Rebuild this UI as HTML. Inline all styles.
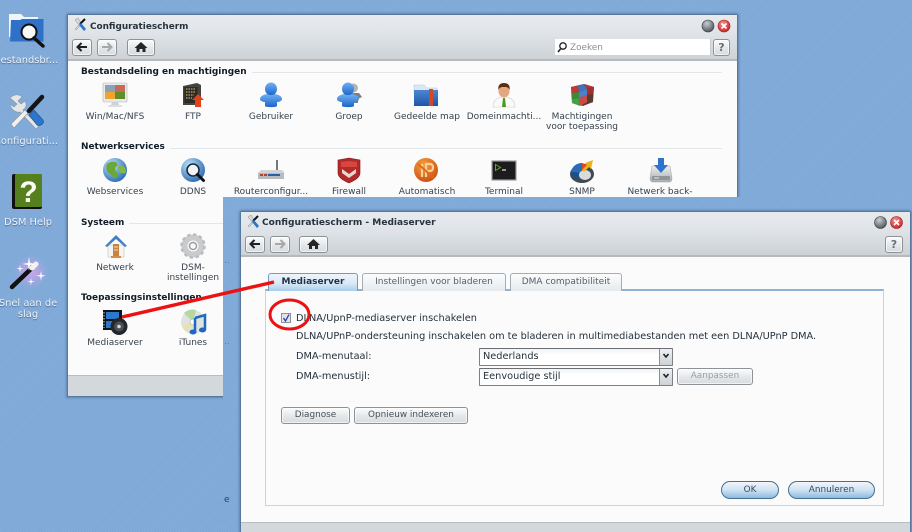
<!DOCTYPE html>
<html lang="nl">
<head>
<meta charset="utf-8">
<title>Configuratiescherm - Mediaserver</title>
<style>
html,body{margin:0;padding:0;width:912px;height:532px;overflow:hidden;background:#80aad9}
#root{position:absolute;left:0;top:0;width:912px;height:532px;overflow:hidden;filter:blur(.35px);font-family:"DejaVu Sans","Liberation Sans",sans-serif;color:#33404c}
.hatch{background-color:#80aad9;background-image:repeating-linear-gradient(135deg,#86aedb 0,#86aedb 1px,#7ca7d6 1px,#7ca7d6 2px)}
.abs,.win,.bar,.btn,.t,.l,.h,.rule,.dl,svg{position:absolute}
svg{left:0;top:0;overflow:visible}
.win{background:#fbfbfb;border:1px solid #56789f;box-shadow:0 0 2px 1px #5f83ad;border-radius:2px 2px 0 0}
.bar{background:linear-gradient(#e8ebee,#dfe3e7 45%,#cdd2d6);border-bottom:2px solid #b6babd}
.btn{box-sizing:border-box;border:1px solid #8d9296;border-radius:3px;background:linear-gradient(#fbfcfc,#e4e7ea 55%,#d7dbde);box-shadow:inset 0 0 0 1px rgba(255,255,255,.6)}
.t{white-space:nowrap;font-size:9.75px;line-height:12px;color:#25313c}
.l{width:84px;text-align:center;font-size:9px;line-height:10px;color:#36424e;white-space:nowrap}
.h{font-weight:bold;font-size:8.95px;line-height:12px;color:#101c27;white-space:nowrap;background:#fbfbfb;padding-right:5px}
.rule{height:1px;background:#e2e7ec}
.dl{width:76px;text-align:center;font-size:9.9px;line-height:11px;color:#eef4fb;text-shadow:0 1px 1px #48678c;white-space:nowrap}
.c{text-align:center;color:#46515c;font-size:8.9px;line-height:15px}
.tab{box-sizing:border-box;position:absolute;height:18px;border:1px solid #a4adb5;border-bottom:0;border-radius:3px 3px 0 0;background:linear-gradient(#fbfcfc,#e6eaed);text-align:center;font-size:9px;line-height:17px;color:#55606a;white-space:nowrap}
.sel{position:absolute;box-sizing:border-box;height:18px;border:1px solid #7c8084;border-top-color:#6b6f73;border-radius:1px;background:linear-gradient(#f2f3f4,#fff 35%);font-size:9.75px;line-height:16px;padding-left:3px;color:#25313c}
.ar{position:absolute;right:0;top:0;width:13px;height:16px;background:linear-gradient(#eef0f2,#cdd2d6);border-left:1px solid #8a8e92;box-sizing:border-box}
.pb{box-sizing:border-box;position:absolute;height:18px;border:1px solid #48708f;border-radius:9px;background:linear-gradient(#f1f6fb,#cfe2f2 50%,#8dbbe1);text-align:center;font-size:8.9px;line-height:16px;color:#3c4a55}
</style>
</head>
<body>
<div id="root" class="hatch">

<!-- desktop icons -->
<svg width="912" height="532">
  <defs>
    <linearGradient id="b1" x1="0" y1="0" x2="0" y2="1"><stop offset="0" stop-color="#6fb0f5"/><stop offset="1" stop-color="#1d66c8"/></linearGradient>
    <linearGradient id="b2" x1="0" y1="0" x2="0" y2="1"><stop offset="0" stop-color="#4b86d2"/><stop offset="1" stop-color="#1e57a8"/></linearGradient>
    <linearGradient id="g1" x1="0" y1="0" x2="0" y2="1"><stop offset="0" stop-color="#eceeef"/><stop offset="1" stop-color="#a9adb0"/></linearGradient>
    <radialGradient id="glob" cx=".35" cy=".3" r=".8"><stop offset="0" stop-color="#bfe2fa"/><stop offset="1" stop-color="#1f63ad"/></radialGradient>
    <radialGradient id="org" cx=".4" cy=".3" r=".8"><stop offset="0" stop-color="#f6a13b"/><stop offset="1" stop-color="#c64710"/></radialGradient>
    <radialGradient id="gl" cx=".4" cy=".3" r=".8"><stop offset="0" stop-color="#c8ced2"/><stop offset="1" stop-color="#40474c"/></radialGradient>
    <radialGradient id="rd" cx=".4" cy=".3" r=".8"><stop offset="0" stop-color="#f5928a"/><stop offset="1" stop-color="#c3191c"/></radialGradient>
    <radialGradient id="wn" cx=".5" cy=".5" r=".5"><stop offset="0" stop-color="#d0a4ee"/><stop offset="1" stop-color="#c99fe8" stop-opacity="0"/></radialGradient>
  </defs>
  <!-- folder -->
  <path d="M9 14h12l3 3h14v20H9z" fill="#f1f5fa"/>
  <path d="M11 20h9l2-1h21.500v22.500H10z" fill="#2f70c8"/>
  <circle cx="29" cy="32" r="7.500" fill="#f7f7f7" stroke="#111" stroke-width="2"/>
  <path d="M34 38l9 8" stroke="#111" stroke-width="3.500" stroke-linecap="round"/>
  <!-- tools -->
  <path d="M10 98c4-4 9-4 12-1l-4 4 3 3 4-3c2 4 1 7-2 9l16 16-3 3-16-17c-5 1-9-3-10-8l4 3 3-3z" fill="#e4e6e8" stroke="#8d9498" stroke-width=".6"/>
  <path d="M11 124l14-14 3 3-14 15z" fill="#eef0f1" stroke="#8d9498" stroke-width=".6"/>
  <path d="M42 97L29 111" stroke="#151515" stroke-width="4.500" stroke-linecap="round"/>
  <path d="M29 115l5-5 9 10c2 3-3 7-6 5z" fill="#2c77cc" stroke="#164a8d" stroke-width=".6"/>
  <!-- book -->
  <rect x="12" y="174" width="30" height="35" rx="2" fill="#111"/>
  <rect x="15" y="174" width="27" height="33" rx="1" fill="#55801d"/>
  <text x="28.500" y="202" text-anchor="middle" font-family="Liberation Sans" font-weight="bold" font-size="30" fill="#fbfbf4">?</text>
  <!-- wand -->
  <circle cx="31" cy="272" r="17" fill="url(#wn)"/>
  <path d="M12 287L35 265" stroke="#111" stroke-width="4.500" stroke-linecap="round"/>
  <path d="M32 268L36 264" stroke="#f2f2f2" stroke-width="5" stroke-linecap="round"/>
  <path d="M29 257l1 6 6 1-6 1-1 6-1-6-6-1 6-1zM41 271l.8 4 4 .8-4 .8-.8 4-.8-4-4-.8 4-.8zM20 265l.6 3 3 .6-3 .6-.6 3-.6-3-3-.6 3-.6zM31 278l.6 3 3 .6-3 .6-.6 3-.6-3-3-.6 3-.6z" fill="#fff"/>
</svg>
<div class="dl" style="left:-12px;top:55px">Bestandsbr...</div>
<div class="dl" style="left:-12px;top:136px">Configurati...</div>
<div class="dl" style="left:-10px;top:217px">DSM Help</div>
<div class="dl" style="left:-10px;top:298px">Snel aan de<br>slag</div>

<!-- window 1 -->
<div class="win" style="left:67px;top:14px;width:669px;height:381px"></div>
<div class="bar" style="left:68px;top:15px;width:669px;height:44px"></div>
<div class="t" style="left:90px;top:21px;font-weight:bold;font-size:8.9px;color:#27333e">Configuratiescherm</div>
<div class="btn" style="left:72px;top:39px;width:20px;height:17px"></div>
<div class="btn" style="left:97px;top:39px;width:20px;height:17px"></div>
<div class="btn" style="left:127px;top:39px;width:28px;height:17px"></div>
<div class="abs" style="left:555px;top:39px;width:155px;height:16px;background:#fff;border-bottom:1px solid #d0d4d7;border-right:1px solid #c8ccd0"></div>
<div class="t" style="left:570px;top:42px;color:#8a8f94;font-size:8.9px">Zoeken</div>
<div class="btn c" style="left:713px;top:39px;width:17px;height:17px;font-weight:bold;font-size:11px;color:#6a7075">?</div>
<div class="abs" style="left:68px;top:375px;width:669px;height:21px;background:#d3d8dc;border-top:1px solid #b9bdc0;box-sizing:border-box"></div>

<div class="rule" style="left:81px;top:72px;width:641px"></div>
<div class="h" style="left:81px;top:66px">Bestandsdeling en machtigingen</div>
<div class="rule" style="left:81px;top:148px;width:641px"></div>
<div class="h" style="left:81px;top:141px">Netwerkservices</div>
<div class="rule" style="left:81px;top:223px;width:641px"></div>
<div class="h" style="left:81px;top:217px">Systeem</div>
<div class="h" style="left:81px;top:292px">Toepassingsinstellingen</div>

<div class="l" style="left:73px;top:112px">Win/Mac/NFS</div>
<div class="l" style="left:151px;top:112px">FTP</div>
<div class="l" style="left:229px;top:112px">Gebruiker</div>
<div class="l" style="left:307px;top:112px">Groep</div>
<div class="l" style="left:385px;top:112px">Gedeelde map</div>
<div class="l" style="left:462px;top:112px">Domeinmachti...</div>
<div class="l" style="left:540px;top:112px">Machtigingen<br>voor toepassing</div>
<div class="l" style="left:73px;top:187px">Webservices</div>
<div class="l" style="left:151px;top:187px">DDNS</div>
<div class="l" style="left:229px;top:187px">Routerconfigur...</div>
<div class="l" style="left:307px;top:187px">Firewall</div>
<div class="l" style="left:385px;top:187px">Automatisch</div>
<div class="l" style="left:462px;top:187px">Terminal</div>
<div class="l" style="left:540px;top:187px">SNMP</div>
<div class="l" style="left:618px;top:187px">Netwerk back-</div>
<div class="l" style="left:73px;top:263px">Netwerk</div>
<div class="l" style="left:151px;top:263px">DSM-<br>instellingen</div>
<div class="l" style="left:73px;top:338px">Mediaserver</div>
<div class="l" style="left:151px;top:338px">iTunes</div>

<svg width="912" height="532">
  <!-- title tools -->
  <g transform="translate(74,18)"><path d="M1 2l4 5 2-2-3-5z M1 11l5-5 1 1-5 5z" fill="#d7dadc" stroke="#888" stroke-width=".5"/><path d="M11 1L6 6" stroke="#111" stroke-width="2"/><path d="M5 7l2-2 5 6-2 2z" fill="#2c77cc"/></g>
  <!-- nav -->
  <path d="M87 47H78M81.500 43l-4 4 4 4" fill="none" stroke="#1d1f21" stroke-width="2"/>
  <path d="M102 47h9M107.500 43l4 4-4 4" fill="none" stroke="#a5a9ac" stroke-width="2"/>
  <path d="M141 42l-6.500 6h2v4h3v-3h3v3h3v-4h2z" fill="#23272a"/>
  <!-- search -->
  <circle cx="563" cy="46" r="3.200" fill="none" stroke="#222" stroke-width="1.300"/><path d="M560.500 49l-2.500 3" stroke="#222" stroke-width="1.600"/>
  <!-- win ctrl -->
  <circle cx="708" cy="26" r="6" fill="url(#gl)" stroke="#3b4246" stroke-width=".6"/>
  <circle cx="724" cy="26" r="6" fill="url(#rd)" stroke="#a31a1d" stroke-width=".6"/>
  <path d="M721.500 23.500l5 5m0-5l-5 5" stroke="#fff" stroke-width="1.700"/>

  <!-- monitor -->
  <g transform="translate(103,83)">
    <rect width="24" height="19" rx="1" fill="#e9ebeb" stroke="#b0b4b5" stroke-width=".6"/>
    <rect x="2" y="2" width="10" height="7" fill="#8aa2b5"/><rect x="12" y="2" width="10" height="7" fill="#c86a55"/>
    <rect x="2" y="9" width="10" height="7" fill="#f0a32f"/><rect x="12" y="9" width="10" height="7" fill="#5f8f2a"/>
    <path d="M9 19h6l1 3H8z" fill="#cfd2d3"/><rect x="5" y="22" width="14" height="2" rx="1" fill="#dcdfdf"/>
  </g>
  <!-- FTP -->
  <g transform="translate(183,83)">
    <path d="M0 3l14-3 4 2v20H0z" fill="#44453f"/><rect x="1.500" y="4" width="13" height="16" fill="#2c2b26"/>
    <path d="M3 6h10M3 9h10M3 12h8M3 15h6" stroke="#c8a862" stroke-width="1.200" stroke-dasharray="1.500 1"/>
    <path d="M15 11l6 6h-3v7h-6v-7H9z" fill="#e0421c"/>
  </g>
  <!-- user -->
  <g transform="translate(260,83)">
    <ellipse cx="11" cy="6" rx="6" ry="6.500" fill="url(#b1)"/>
    <path d="M7 11C2 12 0 14 0 16c0 2 3 3 5 3v4c0 1.500 12 1.500 12 0v-4c2 0 5-1 5-3 0-2-2-4-7-5-2 1.500-6 1.500-8 0z" fill="url(#b1)"/>
  </g>
  <!-- group -->
  <g transform="translate(337,83)">
    <circle cx="16.500" cy="5" r="4.500" fill="#b3b6b8"/><path d="M14 10h8l3 4-4 2v4h-6z" fill="#7c8082"/>
    <ellipse cx="11" cy="6" rx="6" ry="6.500" fill="url(#b1)"/>
    <path d="M7 11C2 12 0 14 0 16c0 2 3 3 5 3v4c0 1.500 12 1.500 12 0v-4c2 0 5-1 5-3 0-2-2-4-7-5-2 1.500-6 1.500-8 0z" fill="url(#b1)"/>
  </g>
  <!-- shared folder -->
  <g transform="translate(414,85)">
    <path d="M0 0h10l3 3h10v5H0z" fill="#dbe7f4" stroke="#b8c9dc" stroke-width=".5"/>
    <rect x="0" y="5" width="24" height="16" fill="url(#b2)"/>
    <rect x="15" y="4" width="4" height="17" fill="#d5491c"/>
  </g>
  <!-- domain -->
  <g transform="translate(492,83)">
    <path d="M1 24c0-6 3-9 9-10h4c6 1 9 4 9 10z" fill="#fafafa" stroke="#c9cdc9" stroke-width=".6"/>
    <ellipse cx="12" cy="8" rx="5.500" ry="6.500" fill="#e2a77c"/>
    <path d="M6.500 7c-1-5 2-7 5.500-7s6.500 2 5.500 7c-1-3-3-3-5.500-3s-4.500 0-5.500 3z" fill="#5b2d12"/>
    <path d="M11 15h2l1 9h-4z" fill="#4c9a22"/>
  </g>
  <!-- cube -->
  <g transform="translate(570,84)">
    <path d="M1 3L14 0l10 3-1 15-10 4-11-3z" fill="#5f3b35"/>
    <path d="M1 3l7-1 1 6-7 1z" fill="#c8352f"/><path d="M8 2l6-2 3 5-8 3z" fill="#3e73c2"/><path d="M14 0l10 3-7 2z" fill="#a83a34"/>
    <path d="M2 9l7-1 0 6-7 1z" fill="#3a8a3a"/><path d="M9 8l8-3 0 6-8 3z" fill="#4f7fc6"/><path d="M17 5l7-2-1 7-6 1z" fill="#a82c2c"/>
    <path d="M2 15l7-1 1 8-8-3z" fill="#46a046"/><path d="M9 14l8-3 0 7-7 4z" fill="#cc4a44"/><path d="M17 11l6-1-0 8-6 2z" fill="#5a3a30"/>
  </g>
  <!-- globe -->
  <g transform="translate(103,158)">
    <circle cx="12" cy="12" r="12" fill="url(#glob)"/>
    <path d="M4 6c3-3 8-3 10-1 2 3-2 3-2 6 0 3 4 3 3 6-1 3-4 5-5 2-1-3-5-3-6-6-1-3-1-5 0-7z" fill="#6aa83a"/>
    <path d="M16 7c3 0 7 2 7 6s-3 2-5 2-4-6-2-8z" fill="#82b845"/>
  </g>
  <!-- ddns -->
  <g transform="translate(181,158)">
    <circle cx="12" cy="12" r="12" fill="url(#glob)"/>
    <circle cx="12" cy="12" r="6" fill="#eff3f6" stroke="#1b2a3a" stroke-width="1.600"/>
    <path d="M16.500 16.500l6 6" stroke="#111" stroke-width="3" stroke-linecap="round"/>
  </g>
  <!-- router -->
  <g transform="translate(258,160)">
    <path d="M19 0v11" stroke="#777" stroke-width="2"/>
    <path d="M0 13l3-3h21l3 3z" fill="#d1d4d6"/>
    <rect x="0" y="13" width="26" height="6" fill="#b7bbbe"/>
    <path d="M2 15h3M6 15h3" stroke="#a43" stroke-width="2"/><path d="M10 15h12" stroke="#2b5ea6" stroke-width="2"/>
  </g>
  <!-- firewall -->
  <g transform="translate(337,158)">
    <path d="M1 2l11-2 11 2v13c0 5-7 8-11 10C8 23 1 20 1 15z" fill="#b42a2a" stroke="#7d1616" stroke-width=".6"/>
    <path d="M4 4l8-1 8 1v5H4z" fill="#d7473f"/>
    <path d="M5 11l7 5 7-5v4l-7 5-7-5z" fill="#e6d9d2"/>
  </g>
  <!-- auto ip -->
  <g transform="translate(414,158)">
    <circle cx="12" cy="12" r="12" fill="url(#org)"/>
    <path d="M8 6v13M12 19V6h4c4 0 4 7 0 7h-4" fill="none" stroke="#f9cf96" stroke-width="2.200"/>
    <path d="M4 6l16 14" stroke="#dd6a20" stroke-width="2"/>
  </g>
  <!-- terminal -->
  <g transform="translate(492,161)">
    <rect width="24" height="19" fill="#1b1c1b" stroke="#9a9d9e" stroke-width="1.200"/>
    <path d="M3.500 3.500l5 3-5 3z" fill="none" stroke="#63a730" stroke-width="1"/><path d="M10 9h4" stroke="#e7e7e7" stroke-width="1.200"/>
  </g>
  <!-- snmp -->
  <g transform="translate(570,160)">
    <ellipse cx="12" cy="14" rx="12" ry="9" fill="#3f4a55"/>
    <path d="M12 13L1 12C2 6 7 3 12 3z" fill="#2a6cb8"/><path d="M12 13V3l7 2z" fill="#dd4a2a"/><path d="M12 13l-11-1c0 3 2 6 5 7z" fill="#1c4f8e"/>
    <ellipse cx="15" cy="15" rx="6" ry="5" fill="#d9dcde"/>
    <path d="M23 0l-2 9-2-2-5 5-2-2 5-5-2-2z" fill="#edb31a"/>
  </g>
  <!-- backup -->
  <g transform="translate(649,158)">
    <path d="M3 8h18l2 12c0 3-1 4-3 4H4c-2 0-3-1-3-4z" fill="url(#g1)" stroke="#a0a4a7" stroke-width=".5"/>
    <rect x="3" y="18" width="18" height="4" rx="1" fill="#8f9497"/><path d="M5 20h5" stroke="#e6e8ea" stroke-width="1"/>
    <path d="M9 0h6v7h4l-7 8-7-8h4z" fill="#2e73ce"/>
  </g>
  <!-- house -->
  <g transform="translate(104,234)">
    <path d="M4 11h16v12H4z" fill="#f4f4f2" stroke="#b6b6b0" stroke-width=".5"/>
    <path d="M1 12L12 1l11 11-2 1-9-8-9 8z" fill="#3f7fc5"/>
    <rect x="9" y="10" width="6" height="12" fill="#c9843f"/><rect x="7" y="22" width="10" height="2" fill="#d58e48"/>
    <path d="M10 13h4M10 16h4" stroke="#f3dcb4" stroke-width="1"/>
  </g>
  <!-- gear -->
  <g transform="translate(181,234)">
    <circle cx="12" cy="12" r="8.500" fill="none" stroke="#c9cbcd" stroke-width="6"/>
    <circle cx="12" cy="12" r="11.500" fill="none" stroke="#b9bcbe" stroke-width="2.500" stroke-dasharray="3.200 2.800"/>
    <circle cx="12" cy="12" r="3.500" fill="none" stroke="#9a9d9f" stroke-width="1.500"/>
  </g>
  <!-- media -->
  <g transform="translate(103,310)">
    <rect x="0" y="0" width="19" height="20" fill="#101418"/>
    <rect x="3" y="2" width="13" height="7" fill="#2b78cc"/><rect x="3" y="11" width="13" height="7" fill="#2b78cc"/>
    <path d="M1 2v16" stroke="#ccc" stroke-width="1" stroke-dasharray="1.500 1.500"/>
    <circle cx="16" cy="16.500" r="8.500" fill="#24282b"/><circle cx="16" cy="16.500" r="5" fill="#4a5055"/><circle cx="16" cy="16.500" r="1.800" fill="#d5d8da"/>
  </g>
  <!-- itunes -->
  <g transform="translate(181,310)">
    <circle cx="12" cy="12" r="12" fill="#dfe3df"/>
    <path d="M12 12L3 3a12 12 0 0 1 12-3z" fill="#b5d8a0"/><path d="M12 12L1 16a12 12 0 0 0 6 6z" fill="#eadfb0"/>
    <circle cx="12" cy="12" r="3" fill="#fff" stroke="#999" stroke-width=".5"/>
    <path d="M14 8l10-3v15" fill="none" stroke="#1e69c2" stroke-width="2.500"/><path d="M14 8v14" stroke="#1e69c2" stroke-width="2.500"/>
    <ellipse cx="12" cy="22" rx="3.500" ry="2.500" fill="#1e69c2"/><ellipse cx="21.500" cy="20" rx="3.500" ry="2.500" fill="#1e69c2"/>
  </g>
</svg>

<!-- blue cover -->
<div class="abs hatch" style="left:223px;top:197px;width:689px;height:335px"></div>
<div class="abs" style="left:224px;top:258px;color:#5f7b98;font-size:9px;line-height:6px">..</div>
<div class="abs" style="left:224px;top:339px;color:#5f7b98;font-size:9px;line-height:6px">..</div>
<div class="abs" style="left:224px;top:494px;color:#2f4255;font-size:9px;line-height:12px">e</div>

<!-- window 2 -->
<div class="win" style="left:240px;top:211px;width:669px;height:330px"></div>
<div class="bar" style="left:241px;top:212px;width:669px;height:43px"></div>
<div class="t" style="left:262px;top:217px;font-weight:bold;font-size:9.05px;color:#27333e">Configuratiescherm - Mediaserver</div>
<div class="btn" style="left:245px;top:236px;width:20px;height:17px"></div>
<div class="btn" style="left:270px;top:236px;width:20px;height:17px"></div>
<div class="btn" style="left:299px;top:236px;width:29px;height:17px"></div>
<div class="btn c" style="left:885px;top:236px;width:18px;height:17px;font-weight:bold;font-size:11px;color:#6a7075">?</div>
<div class="abs" style="left:241px;top:522px;width:669px;height:10px;background:#d3d8dc;border-top:1px solid #b9bdc0;box-sizing:border-box"></div>

<!-- panel -->
<div class="abs" style="left:265px;top:289px;width:619px;height:217px;box-sizing:border-box;background:#fbfbfb;border:1px solid #c3d4e6;border-top:2px solid #8fb3d6"></div>
<div class="tab" style="left:268px;top:273px;width:90px;border-color:#6f9cc6;background:linear-gradient(#eef5fb,#d9e9f6 55%,#a8cdea);font-weight:bold;color:#1e3349;font-size:9px">Mediaserver</div>
<div class="tab" style="left:362px;top:273px;width:144px">Instellingen voor bladeren</div>
<div class="tab" style="left:510px;top:273px;width:112px">DMA compatibiliteit</div>

<div class="abs" style="left:281px;top:313px;width:10px;height:10px;box-sizing:border-box;border:1px solid #8d9296;background:#e2e5e8"></div>
<div class="t" style="left:296px;top:313px">DLNA/UpnP-mediaserver inschakelen</div>
<div class="t" style="left:296px;top:331px">DLNA/UPnP-ondersteuning inschakelen om te bladeren in multimediabestanden met een DLNA/UPnP DMA.</div>
<div class="t" style="left:296px;top:351px">DMA-menutaal:</div>
<div class="t" style="left:296px;top:371px">DMA-menustijl:</div>
<div class="sel" style="left:479px;top:348px;width:194px;line-height:16px">Nederlands<span class="ar"></span></div>
<div class="sel" style="left:479px;top:368px;width:194px;line-height:16px">Eenvoudige stijl<span class="ar"></span></div>
<div class="btn c" style="left:677px;top:368px;width:76px;height:17px;color:#9a9fa3">Aanpassen</div>
<div class="btn c" style="left:281px;top:407px;width:69px;height:17px">Diagnose</div>
<div class="btn c" style="left:354px;top:407px;width:114px;height:17px">Opnieuw indexeren</div>
<div class="pb" style="left:721px;top:481px;width:58px">OK</div>
<div class="pb" style="left:788px;top:481px;width:87px">Annuleren</div>

<svg width="912" height="532">
  <g transform="translate(247,215)"><path d="M1 2l4 5 2-2-3-5z M1 11l5-5 1 1-5 5z" fill="#d7dadc" stroke="#888" stroke-width=".5"/><path d="M11 1L6 6" stroke="#111" stroke-width="2"/><path d="M5 7l2-2 5 6-2 2z" fill="#2c77cc"/></g>
  <path d="M260 244h-9M254.500 240l-4 4 4 4" fill="none" stroke="#1d1f21" stroke-width="2"/>
  <path d="M275 244h9M280.500 240l4 4-4 4" fill="none" stroke="#a5a9ac" stroke-width="2"/>
  <path d="M313.500 239l-6.500 6h2v4h3v-3h3v3h3v-4h2z" fill="#23272a"/>
  <circle cx="880.500" cy="222.500" r="6" fill="url(#gl)" stroke="#3b4246" stroke-width=".6"/>
  <circle cx="896.500" cy="222.500" r="6" fill="url(#rd)" stroke="#a31a1d" stroke-width=".6"/>
  <path d="M894 220l5 5m0-5l-5 5" stroke="#fff" stroke-width="1.700"/>
  <path d="M283.500 318l2 3 3.500-6.500" fill="none" stroke="#2a3fa8" stroke-width="1.300"/>
  <path d="M663.500 354l2.500 3 2.500-3M663.500 374l2.500 3 2.500-3" fill="none" stroke="#222" stroke-width="1.600"/>
  <!-- annotation -->
  <path d="M122 317L274 282" stroke="#ee1111" stroke-width="3.400"/>
  <ellipse cx="289.500" cy="314.500" rx="19.500" ry="14.500" fill="none" stroke="#ee1111" stroke-width="3"/>
</svg>
</div>
</body>
</html>
